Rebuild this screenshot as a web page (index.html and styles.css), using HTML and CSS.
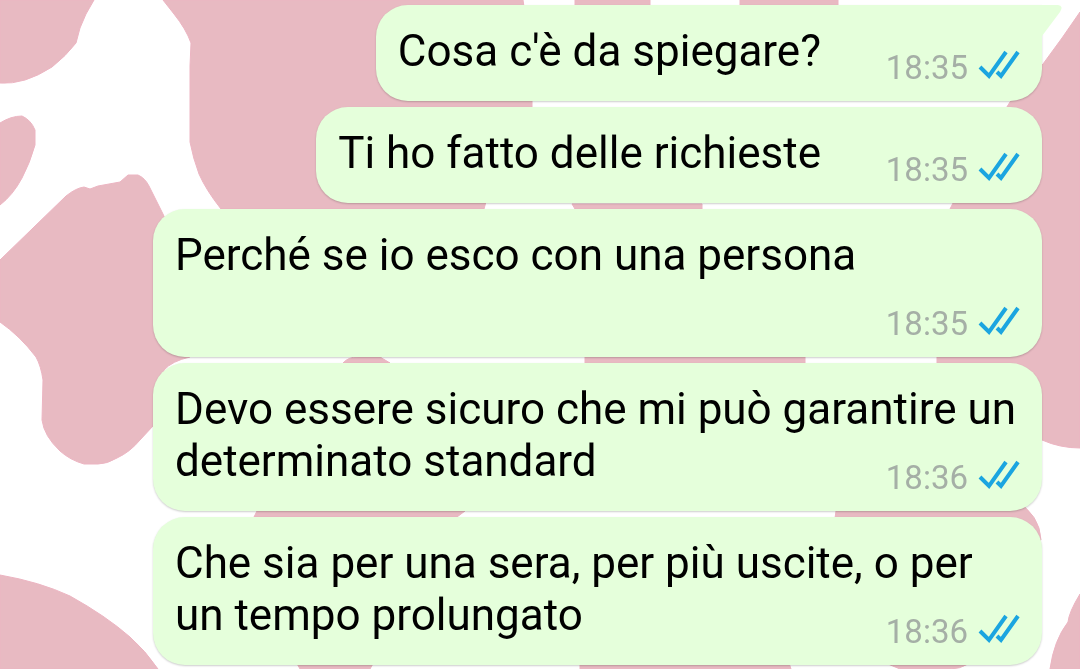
FILE: index.html
```html
<!DOCTYPE html>
<html lang="it">
<head>
  <meta charset="UTF-8">
  <meta name="viewport" content="width=device-width, initial-scale=1.0">
  <title>Chat</title>
  <link rel="stylesheet" href="styles.css">
</head>
<body>
  <!-- wallpaper -->
  <svg class="wallpaper" viewBox="0 0 1080 669" preserveAspectRatio="xMidYMid slice" aria-hidden="true">
    <path d="M0 0H94L86 14L80 28L76 43Q66 56 52 67Q38 76 25 80Q12 84 0 83Z"/>
    <path d="M0 123Q11 116 22 116Q31 120 35 130V145Q30 163 22 178Q13 195 0 205Z"/>
    <path d="M163 0H523L532 60V108L500 150L484 209H221Q206 190 199 174Q193 158 190 142V66L191 43Q186 29 174 14Z"/>
    <path d="M575 0H650V30H575Z"/>
    <path d="M740 0H838V30H740Z"/>
    <path d="M0 260L66 196Q76 188 84 187L90 189L98 186L120 182L128 175H138Q145 178 149 186L163 214L200 300L190 357Q172 361 164 370L153 426L140 440Q130 452 117 458Q107 464 98 464H84Q70 460 60 451Q44 436 42 420L43 380Q41 366 36 357Q20 336 0 322Z"/>
    <path d="M0 575Q40 582 70 596Q106 616 130 637Q145 650 158 669H0Z"/>
    <path d="M1080 12L1062 38L1043 64L1010 102L980 150L950 209L937 357V363L980 420L1042 440Q1060 448 1080 448Z"/>
    <path d="M572 204H702V209H575Z"/>
    <path d="M343 363Q348 357 358 357H380L390 363Z"/>
    <path d="M585 355H805V365H585Z"/>
    <path d="M257 511H465L457 517H254Z"/>
    <path d="M836 511L835 500H1015Q1040 515 1041 540H832Z"/>
    <path d="M295 660H375L370 669H300Z"/>
    <path d="M580 660H788L791 669H580Z"/>
    <path d="M888 664H968Q960 669 950 669H900Z"/>
    <path d="M1080 594Q1069 612 1068 622Q1054 640 1050 669H1080Z"/>
  </svg>

  <svg class="symbols" aria-hidden="true">
    <symbol id="read" viewBox="0 0 42 30">
      <path d="M2 17L11 26L28 2M19 22L23 26L40 2"/>
    </symbol>
  </svg>

  <main class="chat">
    <div class="message first">
      <p class="text">Cosa c'è da spiegare?</p>
      <div class="meta"><time>18:35</time><svg class="ticks" role="img" aria-label="Letto"><use href="#read"/></svg></div>
      <svg class="tail" viewBox="0 0 22 32" aria-hidden="true"><path d="M0 0H16Q22 1 18 7L0 31Z"/></svg>
    </div>
    <div class="message">
      <p class="text">Ti ho fatto delle richieste</p>
      <div class="meta"><time>18:35</time><svg class="ticks" role="img" aria-label="Letto"><use href="#read"/></svg></div>
    </div>
    <div class="message">
      <p class="text">Perché se io esco con una persona</p>
      <div class="meta"><time>18:35</time><svg class="ticks" role="img" aria-label="Letto"><use href="#read"/></svg></div>
    </div>
    <div class="message">
      <p class="text">Devo essere sicuro che mi può garantire un determinato standard</p>
      <div class="meta"><time>18:36</time><svg class="ticks" role="img" aria-label="Letto"><use href="#read"/></svg></div>
    </div>
    <div class="message">
      <p class="text">Che sia per una sera, per più uscite, o per un tempo prolungato</p>
      <div class="meta"><time>18:36</time><svg class="ticks" role="img" aria-label="Letto"><use href="#read"/></svg></div>
    </div>
  </main>
</body>
</html>
```

FILE: styles.css
```css
body {
  margin: 0;
  background-color: #fff;
  font-family: Roboto, "Liberation Sans", sans-serif;
  color: #000;
}

.wallpaper {
  position: fixed;
  inset: 0;
  width: 100%;
  height: 100%;
  z-index: -1;
  fill: #e8bac2;
  stroke: #ecb5c2;
  stroke-width: 1;
}

.symbols {
  position: absolute;
  width: 0;
  height: 0;
}

.chat {
  display: flex;
  flex-direction: column;
  align-items: flex-end;
  gap: 6px;
  padding: 5px 38px 3px 153px;
}

.message {
  position: relative;
  box-sizing: border-box;
  padding: 20px 22px 24px;
  border-radius: 32px;
  background-color: #e5ffdb;
  box-shadow: 0 1px 2px rgba(0, 0, 0, 0.2);
}

.message.first {
  border-top-right-radius: 0;
}

.text {
  margin: 0;
  font-size: 44px;
  line-height: 52px;
}

/* keeps room for the time at the end of the last line */
.text::after {
  content: "";
  display: inline-block;
  width: 199px;
  height: 1px;
}

.meta {
  display: flex;
  justify-content: flex-end;
  align-items: center;
  gap: 10px;
  height: 40px;
  margin: -30px 0 -10px;
  font-size: 33px;
  color: #a5afa6;
}

.ticks {
  width: 42px;
  height: 30px;
  margin-bottom: 4px;
  fill: none;
  stroke: #1ba5e0;
  stroke-width: 4;
}

.tail {
  position: absolute;
  top: 0;
  left: 100%;
  width: 22px;
  height: 32px;
  fill: #e5ffdb;
}
```
